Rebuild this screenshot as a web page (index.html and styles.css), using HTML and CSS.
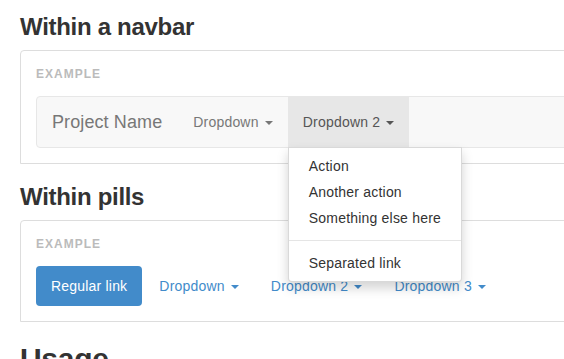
FILE: index.html
```html
<!DOCTYPE html>
<html lang="en">
<head>
<meta charset="utf-8">
<title>Dropdowns</title>
<link rel="stylesheet" href="styles.css">
</head>
<body>
<div class="page">
  <h3 class="section-title first">Within a navbar</h3>
  <div class="example">
    <div class="example-label">Example</div>
    <nav class="navbar">
      <a class="navbar-brand" href="#">Project Name</a>
      <ul class="navbar-nav">
        <li class="nav-item"><a class="nav-link" href="#">Dropdown <span class="caret"></span></a></li>
        <li class="nav-item open">
          <a class="nav-link" href="#">Dropdown 2 <span class="caret"></span></a>
          <ul class="dropdown-menu">
            <li><a href="#">Action</a></li>
            <li><a href="#">Another action</a></li>
            <li><a href="#">Something else here</a></li>
            <li class="divider"></li>
            <li><a href="#">Separated link</a></li>
          </ul>
        </li>
      </ul>
    </nav>
  </div>

  <h3 class="section-title">Within pills</h3>
  <div class="example">
    <div class="example-label">Example</div>
    <ul class="pills">
      <li class="pill active"><a href="#">Regular link</a></li>
      <li class="pill"><a href="#">Dropdown <span class="caret"></span></a></li>
      <li class="pill"><a href="#">Dropdown 2 <span class="caret"></span></a></li>
      <li class="pill"><a href="#">Dropdown 3 <span class="caret"></span></a></li>
    </ul>
  </div>

  <h2 class="page-title">Usage</h2>
</div>
</body>
</html>
```

FILE: styles.css
```css
html, body {
  margin: 0;
  padding: 0;
  overflow: hidden;
  background: #fff;
}

body {
  font-family: "Liberation Sans", Arial, Helvetica, sans-serif;
  font-size: 14px;
  line-height: 1.428571;
  color: #333;
}

a {
  text-decoration: none;
}

.page {
  width: 760px;
  padding: 14px 0 0 20px;
}

.section-title {
  margin: 20px 0 10px;
  font-size: 24px;
  line-height: 26px;
  font-weight: 700;
  letter-spacing: -0.3px;
  color: #333;
}

.section-title.first {
  margin-top: 0;
}

.page-title {
  margin: 20px 0 10px;
  font-size: 30px;
  line-height: 33px;
  font-weight: 700;
  letter-spacing: -0.3px;
  color: #333;
}

.example {
  border: 1px solid #ddd;
  border-radius: 4px 4px 0 0;
  padding: 15px;
  background: #fff;
}

.example-label {
  font-size: 12px;
  line-height: 17px;
  font-weight: 700;
  color: #bbb;
  text-transform: uppercase;
  letter-spacing: 1px;
  margin-bottom: 13px;
}

/* navbar */
.navbar {
  display: flex;
  align-items: stretch;
  min-height: 50px;
  background: #f8f8f8;
  border: 1px solid #e7e7e7;
  border-radius: 4px;
}

.navbar-brand {
  display: block;
  padding: 15px;
  font-size: 18px;
  line-height: 20px;
  letter-spacing: 0.1px;
  color: #777;
}

.navbar-nav {
  display: flex;
  list-style: none;
  margin: 0 0 0 1px;
  padding: 0;
}

.nav-item {
  position: relative;
}

.nav-link {
  display: block;
  padding: 15px;
  line-height: 20px;
  letter-spacing: 0.2px;
  color: #777;
}

.nav-item.open > .nav-link {
  background: #e7e7e7;
  color: #555;
}

.caret {
  display: inline-block;
  width: 0;
  height: 0;
  margin-left: 2px;
  vertical-align: middle;
  border-top: 4px solid currentColor;
  border-right: 4px solid transparent;
  border-left: 4px solid transparent;
}

/* dropdown menu */
.dropdown-menu {
  position: absolute;
  top: 100%;
  left: 0;
  z-index: 1000;
  min-width: 160px;
  margin: 0;
  padding: 5px 0;
  list-style: none;
  background: #fff;
  border: 1px solid rgba(0, 0, 0, 0.15);
  border-radius: 0 0 4px 4px;
  box-shadow: 0 6px 12px rgba(0, 0, 0, 0.175);
}

.dropdown-menu a {
  display: block;
  padding: 3px 20px;
  line-height: 20px;
  letter-spacing: 0.2px;
  color: #333;
  white-space: nowrap;
}

.dropdown-menu .divider {
  height: 1px;
  margin: 9px 0;
  background: #e5e5e5;
}

/* pills */
.pills {
  display: flex;
  list-style: none;
  margin: 0;
  padding: 0;
}

.pill + .pill {
  margin-left: 2px;
}

.pill a {
  display: block;
  padding: 10px 15px;
  line-height: 20px;
  letter-spacing: 0.2px;
  border-radius: 4px;
  color: #428bca;
}

.pill.active a {
  background: #428bca;
  color: #fff;
}
```
